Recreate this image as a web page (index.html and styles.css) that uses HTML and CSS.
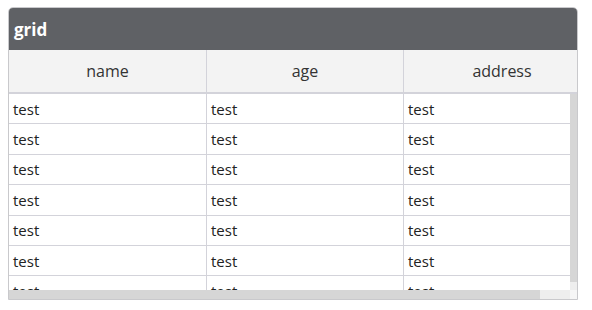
FILE: index.html
```html
<!DOCTYPE html>
<html lang="en">

<head>
  <meta charset="UTF-8" />
  <meta name="viewport" content="width=device-width, initial-scale=1.0" />
  <link rel="stylesheet" href="styles.css">
  <title>grid</title>
</head>

<body>
  <div class="panel">
    <div class="panel-title">grid</div>

    <div class="grid-head">
      <div class="row head-row">
        <div class="cell">name</div>
        <div class="cell">age</div>
        <div class="cell">address</div>
      </div>
    </div>

    <div class="grid-body">
      <div class="viewport">
        <div class="row"><div class="cell">test</div><div class="cell">test</div><div class="cell">test</div></div>
        <div class="row"><div class="cell">test</div><div class="cell">test</div><div class="cell">test</div></div>
        <div class="row"><div class="cell">test</div><div class="cell">test</div><div class="cell">test</div></div>
        <div class="row"><div class="cell">test</div><div class="cell">test</div><div class="cell">test</div></div>
        <div class="row"><div class="cell">test</div><div class="cell">test</div><div class="cell">test</div></div>
        <div class="row"><div class="cell">test</div><div class="cell">test</div><div class="cell">test</div></div>
        <div class="row"><div class="cell">test</div><div class="cell">test</div><div class="cell">test</div></div>
      </div>
      <div class="vscroll"><div class="thumb"></div></div>
      <div class="hscroll"><div class="thumb"></div></div>
      <div class="corner"></div>
    </div>
  </div>
</body>

</html>
```

FILE: styles.css
```css
* {
  box-sizing: border-box;
  padding: 0;
  margin: 0;
}

body {
  background-color: #fff;
  font-family: "Open Sans", "Noto Sans", sans-serif;
  color: #222;
}

.panel {
  width: 570px;
  margin: 7px 0 0 8px;
  border: 1px solid #c9c9cc;
  border-radius: 5px 5px 0 0;
  overflow: hidden;
}

.panel-title {
  height: 42px;
  background-color: #5f6165;
  color: #fff;
  font-size: 17px;
  font-weight: 700;
  padding: 0 5px;
  display: flex;
  align-items: center;
}

.grid-head {
  overflow: hidden;
  background-color: #f3f3f3;
  border-bottom: 2px solid #d3d3da;
}

.row {
  display: grid;
  grid-template-columns: 198px 197px 197px;
  width: 592px;
}

.head-row {
  height: 42px;
}

.head-row .cell {
  display: flex;
  align-items: center;
  justify-content: center;
  font-size: 16px;
  color: #333;
  border-right: 1px solid #d3d3da;
}

.grid-body {
  display: grid;
  grid-template-columns: 1fr 7px;
  grid-template-rows: 196px 9px;
}

.viewport {
  overflow: hidden;
}

.viewport .row {
  height: 30.4px;
  border-bottom: 1px solid #d3d3da;
}

.viewport .cell {
  display: flex;
  align-items: center;
  padding-left: 4px;
  font-size: 15px;
  border-right: 1px solid #d3d3da;
}

.vscroll,
.hscroll {
  background-color: #eeeeee;
}

.vscroll .thumb {
  width: 100%;
  height: 188px;
  background-color: #d6d6d6;
}

.hscroll .thumb {
  width: 531px;
  height: 100%;
  background-color: #d6d6d6;
}

.corner {
  background-color: #f6f6f6;
}
```
